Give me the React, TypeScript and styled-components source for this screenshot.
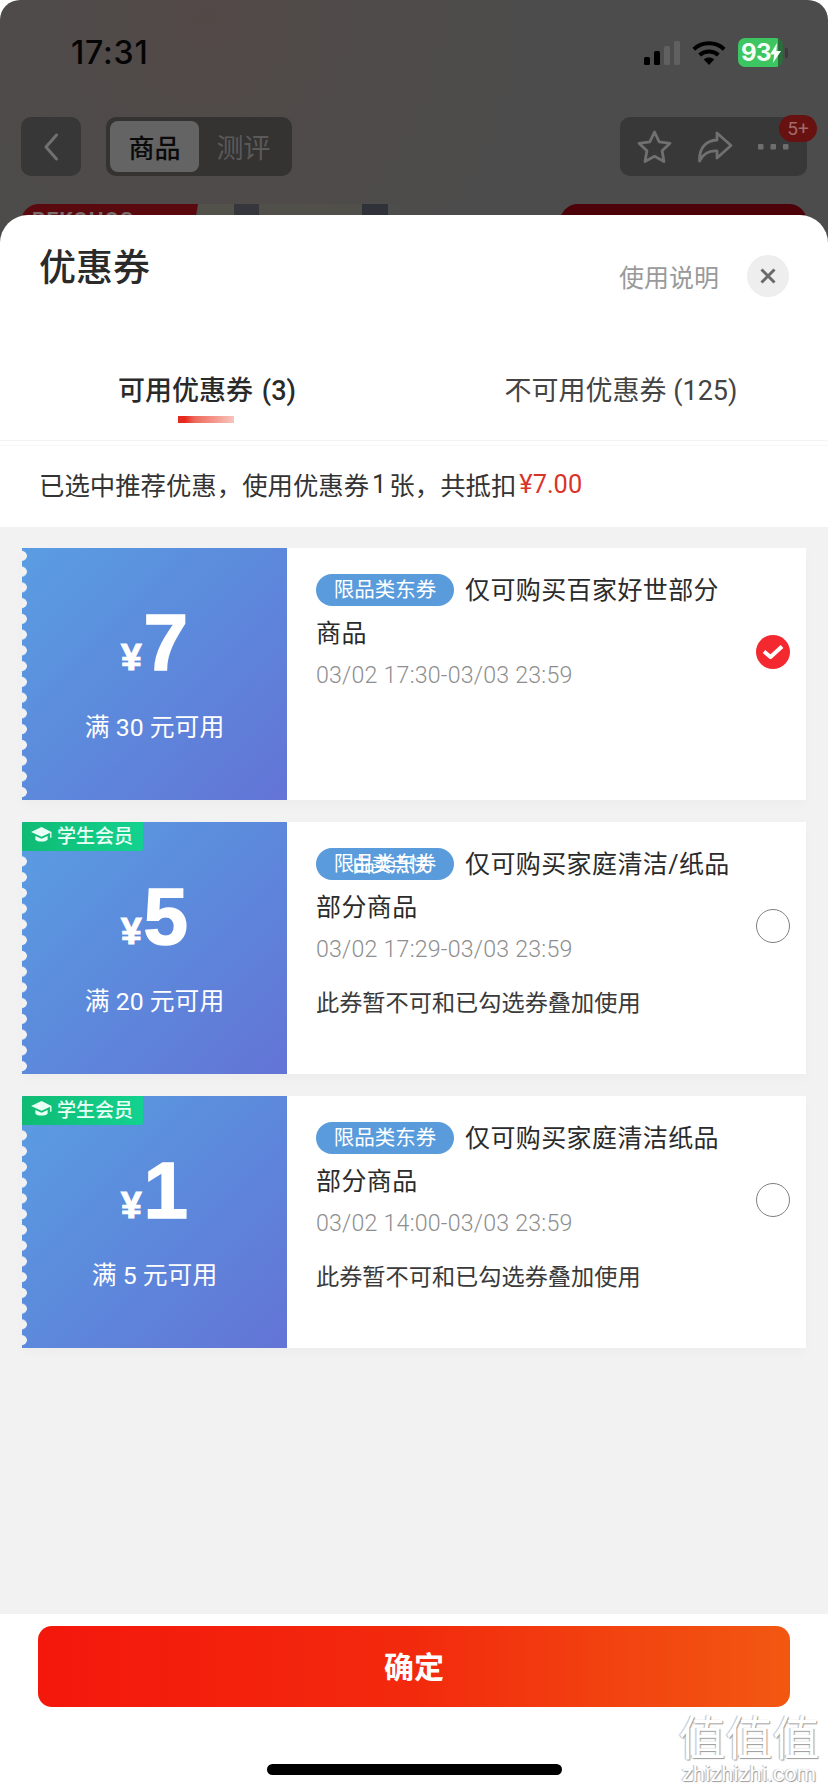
import React from "react";
import styled, { createGlobalStyle } from "styled-components";

const GlobalStyle = createGlobalStyle`
  html, body { margin: 0; padding: 0; background: #fff; }
  body { font-family: Roboto, "Noto Sans CJK SC", sans-serif; }
  * { box-sizing: border-box; }
`;

const Page = styled.div`
  position: relative;
  width: 828px;
  height: 1792px;
  display: flex;
  flex-direction: column;
  overflow: hidden;
  background: #fff;
`;

/* Dimmed product page behind the sheet */
const Backdrop = styled.div`
  flex: none;
  overflow: hidden;
  margin-bottom: -28px;
  height: 243px;
  padding: 0 21px;
  background: radial-gradient(circle at 25% 8%, #524947 0%, #4e4b4a 30%, #4c4c4c 55%);
  border-radius: 20px 20px 0 0;
`;

const StatusBar = styled.div`
  height: 117px;
  display: flex;
  justify-content: space-between;
  align-items: flex-start;
  padding: 36px 19px 0 50px;
`;

const Clock = styled.div`
  font: 500 32px/34px Inter, sans-serif;
  letter-spacing: 0.8px;
  color: #050505;
`;

const StatusIcons = styled.div`
  display: flex;
  align-items: center;
  margin-top: 2px;
`;

const Battery = styled.div`
  position: relative;
  width: 45px;
  height: 29px;
  margin-left: 12px;
  border-radius: 7px;
  overflow: hidden;
  background: linear-gradient(90deg, #3cc560 0 89%, #2b6b3c 89% 100%);
  display: flex;
  align-items: center;
  padding-left: 3px;
  font: 700 24px/29px Inter, sans-serif;
  letter-spacing: -0.6px;
  color: #f4fff6;
`;

const BatteryNub = styled.div`
  width: 3px;
  height: 10px;
  margin-left: 2px;
  border-radius: 0 2px 2px 0;
  background: #3a3a3a;
`;

const NavBar = styled.div`
  height: 59px;
  display: flex;
  align-items: stretch;
`;

const BackButton = styled.div`
  width: 60px;
  border-radius: 10px;
  background: #383737;
  display: flex;
  align-items: center;
  justify-content: center;
`;

const Segment = styled.div`
  margin-left: 25px;
  width: 186px;
  padding: 4px;
  border-radius: 10px;
  background: #353232;
  display: flex;
`;

const SegmentItem = styled.div<{ $active?: boolean }>`
  width: 89px;
  border-radius: 8px;
  display: flex;
  align-items: center;
  justify-content: center;
  font-family: "Noto Sans CJK SC", sans-serif;
  font-size: ${(p) => (p.$active ? "26px" : "27px")};
  font-weight: ${(p) => (p.$active ? 500 : 400)};
  background: ${(p) => (p.$active ? "#646464" : "transparent")};
  color: ${(p) => (p.$active ? "#0a0a0a" : "#5a5a5a")};
`;

const NavActions = styled.div`
  position: relative;
  margin-left: auto;
  width: 187px;
  border-radius: 10px;
  background: #383838;
  display: flex;
  align-items: center;
  padding-left: 17px;
  gap: 25px;
`;

const CountBadge = styled.div`
  position: absolute;
  top: -2px;
  right: -10px;
  width: 38px;
  height: 27px;
  border-radius: 14px;
  background: #671110;
  display: flex;
  align-items: center;
  justify-content: center;
  font: 400 19px Roboto, sans-serif;
  color: #a06b68;
`;

const Peek = styled.div`
  margin-top: 28px;
  height: 40px;
  display: flex;
`;

const PeekBanner = styled.div`
  width: 177px;
  border-radius: 18px 0 0 0;
  clip-path: polygon(0 0, 100% 0, 96% 100%, 0 100%);
  background: #5a0a0e;
  padding-left: 11px;
  font: 700 21px/33px Roboto, sans-serif;
  letter-spacing: 1px;
  color: #7a6e6c;
`;

const PeekPhoto = styled.div`
  width: 202px;
  background: linear-gradient(
    90deg,
    #52514a 0 18%,
    #35373d 18% 30%,
    #504f49 30% 81%,
    #30323a 81% 94%,
    #4d4d4d 94%
  );
`;

const PeekPrice = styled.div`
  margin-left: auto;
  width: 247px;
  border-radius: 18px 18px 0 0;
  background: #4c0208;
`;

/* Coupon sheet */
const Sheet = styled.div`
  position: relative;
  flex: 1;
  min-height: 0;
  display: flex;
  flex-direction: column;
  background: #fff;
  border-radius: 28px 28px 0 0;
`;

const SheetHeader = styled.div`
  height: 130px;
  flex: none;
  display: flex;
  justify-content: space-between;
  align-items: flex-start;
  padding: 23px 39px 0 39px;
`;

const SheetTitle = styled.div`
  font: 500 37px/54px "Noto Sans CJK SC", sans-serif;
  color: #2a2a2a;
`;

const HeaderActions = styled.div`
  display: flex;
  align-items: center;
  gap: 28px;
  margin-top: 17px;
`;

const HelpLink = styled.div`
  font: 400 25px/42px "Noto Sans CJK SC", sans-serif;
  color: #9a9a9a;
`;

const CloseButton = styled.div`
  width: 42px;
  height: 42px;
  border-radius: 50%;
  background: #eeeeee;
  display: flex;
  align-items: center;
  justify-content: center;
`;

const Tabs = styled.div`
  height: 96px;
  flex: none;
  display: grid;
  grid-template-columns: 414px 414px;
  border-bottom: 1px solid #f3f3f3;
`;

const Tab = styled.div<{ $active?: boolean }>`
  position: relative;
  display: flex;
  justify-content: center;
  padding-top: 26px;
  font-size: 27px;
  line-height: 40px;
  word-spacing: ${(p) => (p.$active ? "2px" : "0")};
  font-weight: ${(p) => (p.$active ? 500 : 400)};
  color: ${(p) => (p.$active ? "#2a2a2a" : "#444")};
  white-space: pre;
`;

const TabMark = styled.div`
  position: absolute;
  left: 178px;
  top: 71px;
  width: 56px;
  height: 7px;
  background: linear-gradient(90deg, #e5291c 0 12%, #ee6a5c 30%, #f8c4bc 100%);
`;

const Summary = styled.div`
  height: 82px;
  flex: none;
  padding: 0 39px 5px;
  border-top: 1px solid #f8f8f8;
  margin-top: 4px;
  display: flex;
  align-items: center;
  font-size: 25.4px;
  color: #333;
  white-space: pre;
`;

const SummaryCount = styled.span`
  margin: 0 3px;
`;

const SummaryAmount = styled.span`
  margin-left: 3px;
  color: #d9342a;
`;

const CouponList = styled.div`
  flex: 1;
  min-height: 0;
  background: #f2f2f2;
  padding: 21px 22px;
  display: flex;
  flex-direction: column;
  gap: 22px;
`;

const Coupon = styled.div`
  height: 252px;
  flex: none;
  display: grid;
  grid-template-columns: 265px 1fr auto;
  background: #fff;
  box-shadow: 0 5px 10px rgba(0, 0, 0, 0.025);
`;

const CouponValue = styled.div`
  position: relative;
  display: flex;
  flex-direction: column;
  align-items: center;
  padding-top: 53px;
  color: #fff;
  background: linear-gradient(135deg, #5a9de2 0%, #5c8bdc 45%, #6374d6 100%);
  &::before {
    content: "";
    position: absolute;
    left: 0;
    top: 0;
    bottom: 0;
    width: 6px;
    background-image: radial-gradient(circle at 0 50%, #f2f2f2 4.5px, rgba(242, 242, 242, 0) 5.2px);
    background-size: 6px 15.75px;
  }
`;

const Amount = styled.div`
  display: flex;
  align-items: baseline;
  height: 84px;
  line-height: 84px;
  font-family: "Liberation Sans", sans-serif;
  font-weight: 700;
`;

const Yen = styled.span`
  font-size: 37px;
  margin-right: 2px;
  -webkit-text-stroke: 1.2px #fff;
`;

const Digit = styled.span`
  font-size: 80px;
  -webkit-text-stroke: 1.5px #fff;
`;

const Threshold = styled.div`
  margin-top: 26px;
  font-size: 24.8px;
  line-height: 34px;
  font-weight: 400;
  white-space: pre;
`;

const StudentTag = styled.div`
  position: absolute;
  z-index: 1;
  left: 0;
  top: 0;
  width: 121px;
  height: 29px;
  display: flex;
  align-items: center;
  gap: 5px;
  padding: 0 0 3px 9px;
  border-radius: 2px 0 3px 0;
  background: linear-gradient(90deg, #0fbb74, #13d28f);
  font: 500 19px/26px "Noto Sans CJK SC", sans-serif;
  color: #eafff5;
`;

const CouponBody = styled.div`
  min-width: 0;
  padding: 21px 17px 0 29px;
`;

const CouponTitle = styled.div`
  font-size: 25px;
  letter-spacing: 0.4px;
  line-height: 43px;
  color: #2b2b2b;
`;

const ScopeTag = styled.span`
  position: relative;
  display: inline-block;
  vertical-align: top;
  width: 138px;
  height: 32px;
  margin: 5px 11px 0 0;
  border-radius: 16px;
  background: #5a9bdc;
  text-align: center;
  font-size: 20.5px;
  letter-spacing: 0;
  line-height: 32px;
  color: #fff;
`;

const ScopeOverprint = styled.span`
  position: absolute;
  left: 36px;
  top: 1px;
  font-size: 20px;
  letter-spacing: -1px;
  white-space: nowrap;
  color: #fff;
`;

const CouponDate = styled.div`
  font-size: 23.2px;
  font-weight: 300;
  line-height: 40px;
  letter-spacing: 0.2px;
  color: #8e8e8e;
  white-space: nowrap;
`;

const CouponWarning = styled.div`
  margin-top: 17px;
  font-size: 23.2px;
  line-height: 34px;
  color: #3a3a3a;
`;

const RadioCell = styled.div`
  padding: 87px 16px 0 0;
`;

const RadioEmpty = styled.div`
  width: 34px;
  height: 34px;
  border-radius: 50%;
  border: 1.5px solid #808080;
  background: #fff;
`;

const RadioChecked = styled.div`
  width: 34px;
  height: 34px;
  border-radius: 50%;
  background: #f4282f;
  display: flex;
  align-items: center;
  justify-content: center;
`;

const Footer = styled.div`
  height: 178px;
  flex: none;
  padding: 12px 38px 0;
  background: #fff;
`;

const ConfirmButton = styled.div`
  height: 81px;
  border-radius: 14px;
  padding-bottom: 3px;
  background: linear-gradient(90deg, #f4170c 0%, #f22a0d 50%, #f25812 100%);
  display: flex;
  align-items: center;
  justify-content: center;
  font: 700 30px "Noto Sans CJK SC", sans-serif;
  color: #fff;
`;

const HomeIndicator = styled.div`
  width: 295px;
  height: 11px;
  margin: 57px auto 0;
  border-radius: 6px;
  background: #000;
`;

const Watermark = styled.div`
  position: absolute;
  right: 8px;
  bottom: 4px;
  width: 142px;
  display: flex;
  flex-direction: column;
  align-items: center;
  color: #fff;
  text-shadow: 1px 1px 1px #999, -1px 0 1px #bbb;
`;

const WatermarkMark = styled.div`
  font: 400 47px/50px "Noto Sans CJK SC", sans-serif;
`;

const WatermarkSite = styled.div`
  font: 400 22px/28px Roboto, sans-serif;
  white-space: nowrap;
`;

const Signal = () => (
  <svg width="36" height="24" viewBox="0 0 36 24">
    <rect x="0" y="16" width="6" height="8" rx="1.5" fill="#000" />
    <rect x="10" y="10" width="6" height="14" rx="1.5" fill="#000" />
    <rect x="20" y="5" width="6" height="19" rx="1.5" fill="#606060" />
    <rect x="30" y="0" width="6" height="24" rx="1.5" fill="#606060" />
  </svg>
);

const Wifi = () => (
  <svg width="34" height="24" viewBox="0 0 34 24" style={{ marginLeft: 12 }} fill="none" stroke="#000" strokeWidth="4">
    <path d="M1.8 8.2C10.5 0.4 23.5 0.4 32.2 8.2" />
    <path d="M7.6 14C13 9.2 21 9.2 26.4 14" />
    <path d="M17 24l-5.2-5.6c3-2.5 7.4-2.5 10.4 0z" fill="#000" stroke="none" />
  </svg>
);

const Bolt = () => (
  <svg width="11" height="20" viewBox="0 0 11 20" style={{ flex: "none", marginLeft: -1 }}>
    <path d="M7 0 0 11.5h4.2L3 20l8-12H6.4z" fill="#f4fff6" />
  </svg>
);

const Chevron = () => (
  <svg width="16" height="28" viewBox="0 0 16 28" fill="none" stroke="#707070" strokeWidth="3" strokeLinecap="round" strokeLinejoin="round">
    <path d="M13.500 2 3 14l10.500 12" />
  </svg>
);

const StarOutline = () => (
  <svg width="35" height="34" viewBox="0 0 35 34" fill="none" stroke="#707070" strokeWidth="2.8" strokeLinejoin="round">
    <path d="M17.5 2l4.7 9.8 10.8 1.500-7.900 7.400 1.900 10.800-9.500-5.200-9.500 5.200 1.900-10.800-7.900-7.400 10.800-1.500z" />
  </svg>
);

const ShareArrow = () => (
  <svg width="36" height="32" viewBox="0 0 36 32" fill="none" stroke="#707070" strokeWidth="2.8" strokeLinejoin="round" strokeLinecap="round">
    <path d="M20 2l14 12.5L20 27v-7C12 19.500 6 23 2.500 30 2 18 8 9.500 20 9z" />
  </svg>
);

const MoreDots = () => (
  <svg width="32" height="8" viewBox="0 0 32 8" fill="#6e6e6e">
    <rect x="0" y="1" width="5.500" height="5.500" rx="1" />
    <rect x="12.500" y="1" width="5.500" height="5.500" rx="1" />
    <rect x="25" y="1" width="5.500" height="5.500" rx="1" />
  </svg>
);

const CloseCross = () => (
  <svg width="16" height="16" viewBox="0 0 16 16" fill="none" stroke="#6a6a6a" strokeWidth="3">
    <path d="M1.500 1.500l13 13M14.500 1.500l-13 13" />
  </svg>
);

const CheckMark = () => (
  <svg width="22" height="16" viewBox="0 0 22 16" fill="none" stroke="#fff" strokeWidth="4" strokeLinejoin="round">
    <path d="M2 7.500l6.500 5.500L20 2.500" />
  </svg>
);

const GradCap = () => (
  <svg width="21" height="16" viewBox="0 0 22 17" fill="#eafff5">
    <path d="M11 0 0 5.200l11 5.200 9.200-4.300v5.400h1.400V5.200z" />
    <path d="M4.500 9.500v4c2 2.400 10.500 3 13 0v-4L11 12.600z" />
  </svg>
);

interface CouponData {
  amount: string;
  threshold: string;
  title: string;
  date: string;
  student?: boolean;
  overprint?: string;
  warning?: boolean;
  checked?: boolean;
}

const coupons: CouponData[] = [
  {
    amount: "7",
    threshold: "满 30 元可用",
    title: "仅可购买百家好世部分商品",
    date: "03/02 17:30-03/03 23:59",
    checked: true,
  },
  {
    amount: "5",
    threshold: "满 20 元可用",
    title: "仅可购买家庭清洁/纸品部分商品",
    date: "03/02 17:29-03/03 23:59",
    student: true,
    overprint: "由卖点快",
    warning: true,
  },
  {
    amount: "1",
    threshold: "满 5 元可用",
    title: "仅可购买家庭清洁纸品部分商品",
    date: "03/02 14:00-03/03 23:59",
    student: true,
    warning: true,
  },
];

export default function App() {
  return (
    <Page>
      <GlobalStyle />
      <Backdrop>
        <StatusBar>
          <Clock>17:31</Clock>
          <StatusIcons>
            <Signal />
            <Wifi />
            <Battery>
              93
              <Bolt />
            </Battery>
            <BatteryNub />
          </StatusIcons>
        </StatusBar>
        <NavBar>
          <BackButton>
            <Chevron />
          </BackButton>
          <Segment>
            <SegmentItem $active>商品</SegmentItem>
            <SegmentItem>测评</SegmentItem>
          </Segment>
          <NavActions>
            <StarOutline />
            <ShareArrow />
            <MoreDots />
            <CountBadge>5+</CountBadge>
          </NavActions>
        </NavBar>
        <Peek>
          <PeekBanner>BEKOHOS</PeekBanner>
          <PeekPhoto />
          <PeekPrice />
        </Peek>
      </Backdrop>
      <Sheet>
        <SheetHeader>
          <SheetTitle>优惠券</SheetTitle>
          <HeaderActions>
            <HelpLink>使用说明</HelpLink>
            <CloseButton>
              <CloseCross />
            </CloseButton>
          </HeaderActions>
        </SheetHeader>
        <Tabs>
          <Tab $active>
            可用优惠券 (3)
            <TabMark />
          </Tab>
          <Tab>不可用优惠券 (125)</Tab>
        </Tabs>
        <Summary>
          已选中推荐优惠，使用优惠券
          <SummaryCount>1</SummaryCount>
          张，共抵扣
          <SummaryAmount>¥7.00</SummaryAmount>
        </Summary>
        <CouponList>
          {coupons.map((c) => (
            <Coupon key={c.date}>
              <CouponValue>
                {c.student && (
                  <StudentTag>
                    <GradCap />
                    学生会员
                  </StudentTag>
                )}
                <Amount>
                  <Yen>¥</Yen>
                  <Digit>{c.amount}</Digit>
                </Amount>
                <Threshold>{c.threshold}</Threshold>
              </CouponValue>
              <CouponBody>
                <CouponTitle>
                  <ScopeTag>
                    限品类东券
                    {c.overprint && <ScopeOverprint>{c.overprint}</ScopeOverprint>}
                  </ScopeTag>
                  {c.title}
                </CouponTitle>
                <CouponDate>{c.date}</CouponDate>
                {c.warning && <CouponWarning>此券暂不可和已勾选券叠加使用</CouponWarning>}
              </CouponBody>
              <RadioCell>
                {c.checked ? (
                  <RadioChecked>
                    <CheckMark />
                  </RadioChecked>
                ) : (
                  <RadioEmpty />
                )}
              </RadioCell>
            </Coupon>
          ))}
        </CouponList>
        <Footer>
          <ConfirmButton>确定</ConfirmButton>
          <HomeIndicator />
        </Footer>
      </Sheet>
      <Watermark>
        <WatermarkMark>值值值</WatermarkMark>
        <WatermarkSite>zhizhizhi.com</WatermarkSite>
      </Watermark>
    </Page>
  );
}
